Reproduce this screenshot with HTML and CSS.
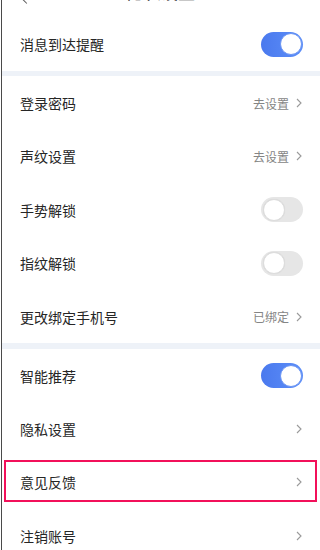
FILE: index.html
```html
<!DOCTYPE html>
<html lang="zh">
<head>
<meta charset="utf-8">
<link rel="stylesheet" href="styles.css">
</head>
<body>
<div class="page">
  <div class="header">
    <span class="back"></span>
    <span class="title">隐私设置</span>
  </div>
  <div class="row">
    <span class="label">消息到达提醒</span>
    <span class="toggle on"><span class="knob"></span></span>
  </div>
  <div class="band"></div>
  <div class="row">
    <span class="label">登录密码</span>
    <span class="value">去设置<svg class="chev" viewBox="0 0 6 10"><path d="M1 1l4 4-4 4" fill="none" stroke="#9a9a9a" stroke-width="1.1"/></svg></span>
  </div>
  <div class="row">
    <span class="label">声纹设置</span>
    <span class="value">去设置<svg class="chev" viewBox="0 0 6 10"><path d="M1 1l4 4-4 4" fill="none" stroke="#9a9a9a" stroke-width="1.1"/></svg></span>
  </div>
  <div class="row">
    <span class="label">手势解锁</span>
    <span class="toggle off"><span class="knob"></span></span>
  </div>
  <div class="row">
    <span class="label">指纹解锁</span>
    <span class="toggle off"><span class="knob"></span></span>
  </div>
  <div class="row">
    <span class="label">更改绑定手机号</span>
    <span class="value">已绑定<svg class="chev" viewBox="0 0 6 10"><path d="M1 1l4 4-4 4" fill="none" stroke="#9a9a9a" stroke-width="1.1"/></svg></span>
  </div>
  <div class="band"></div>
  <div class="row">
    <span class="label">智能推荐</span>
    <span class="toggle on"><span class="knob"></span></span>
  </div>
  <div class="row">
    <span class="label">隐私设置</span>
    <span class="value"><svg class="chev" viewBox="0 0 6 10"><path d="M1 1l4 4-4 4" fill="none" stroke="#9a9a9a" stroke-width="1.1"/></svg></span>
  </div>
  <div class="row highlight">
    <span class="label">意见反馈</span>
    <span class="value"><svg class="chev" viewBox="0 0 6 10"><path d="M1 1l4 4-4 4" fill="none" stroke="#9a9a9a" stroke-width="1.1"/></svg></span>
  </div>
  <div class="row">
    <span class="label">注销账号</span>
    <span class="value"><svg class="chev" viewBox="0 0 6 10"><path d="M1 1l4 4-4 4" fill="none" stroke="#9a9a9a" stroke-width="1.1"/></svg></span>
  </div>
</div>
</body>
</html>
```
FILE: styles.css
```css
html, body {
  margin: 0;
  padding: 0;
  background: #fff;
}
body {
  font-family: "Noto Sans CJK SC", "Noto Sans", sans-serif;
  color: #333;
  overflow: hidden;
}
.page {
  margin-left: 1px;
  border-left: 1px solid #4a4a4a;
  min-height: 550px;
}
.header {
  height: 17.5px;
  overflow: hidden;
  position: relative;
}
.header .title {
  display: block;
  text-align: center;
  font-size: 17px;
  line-height: 20px;
  margin-top: -18px;
  color: #222;
  font-weight: 500;
}
.header .back {
  position: absolute;
  left: 20px;
  top: -7px;
  width: 8px;
  height: 8px;
  border-left: 1.5px solid #555;
  border-bottom: 1.5px solid #555;
  transform: rotate(45deg);
}
.row {
  height: 53.4px;
  display: flex;
  align-items: center;
  justify-content: space-between;
  padding: 0 17px 0 18px;
}
.label {
  font-size: 14px;
  color: #262626;
}
.value {
  display: flex;
  align-items: center;
  gap: 7px;
  font-size: 12px;
  color: #858585;
}
.chev {
  width: 6px;
  height: 10px;
  margin-right: 1px;
}
.band {
  height: 5.5px;
  background: #eef2f8;
}
.toggle {
  width: 42px;
  height: 25px;
  border-radius: 13px;
  display: flex;
  align-items: center;
  box-sizing: border-box;
  padding: 0 1.5px;
}
.toggle .knob {
  width: 22px;
  height: 22px;
  border-radius: 50%;
  background: #fff;
  box-sizing: border-box;
}
.toggle.on {
  background: linear-gradient(90deg, #4a79ee, #5d8ff8);
  justify-content: flex-end;
}
.toggle.on .knob {
  border: 1px solid #6b95f3;
}
.toggle.off {
  background: #e6e6e6;
  justify-content: flex-start;
}
.toggle.off .knob {
  border: 1px solid #dcdcdc;
  box-shadow: 0 0 1px rgba(0,0,0,0.08);
}
.highlight {
  position: relative;
}
.highlight::after {
  content: "";
  position: absolute;
  left: 2px;
  right: 3px;
  top: 4px;
  bottom: 7px;
  border: 2px solid #f2105a;
  pointer-events: none;
}
```
